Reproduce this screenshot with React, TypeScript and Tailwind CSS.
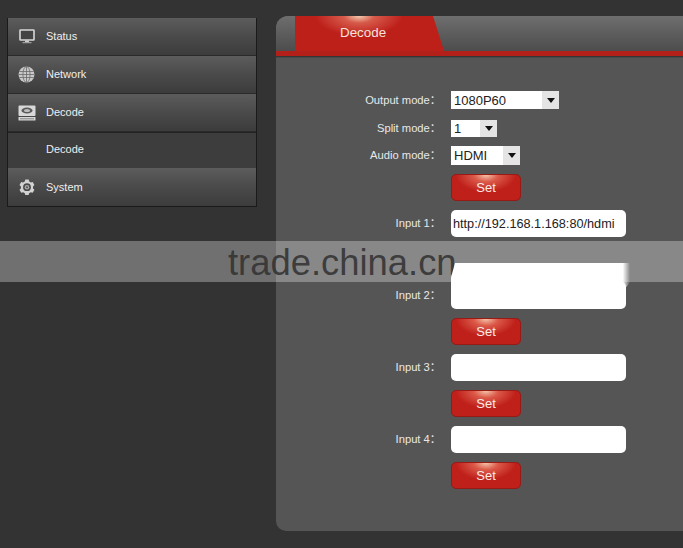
const sans = "font-['Liberation_Sans','Noto_Sans_CJK_SC',sans-serif]";

function MonitorIcon() {
  return (
    <svg width="16" height="15" viewBox="0 0 16 15" fill="none">
      <rect x="1" y="1" width="14" height="10" rx="0.5" fill="#444444" stroke="#d8d8d8" strokeWidth="1.6" />
      <path d="M6 11.5h4v1.5H6z" fill="#cfcfcf" />
      <path d="M3.5 13.2h9v1h-9z" fill="#b5b5b5" />
    </svg>
  );
}
function GlobeIcon() {
  return (
    <svg width="17" height="17" viewBox="0 0 17 17" fill="none">
      <circle cx="8.5" cy="8.5" r="8" fill="#c8c8c8" />
      <g stroke="#6a6a6a" strokeWidth="0.8">
        <ellipse cx="8.5" cy="8.5" rx="3.6" ry="8" />
        <path d="M8.5.5v16M1.2 5.5h14.6M.5 8.5h16M1.2 11.5h14.6" />
      </g>
    </svg>
  );
}
function DriveIcon() {
  return (
    <svg width="18" height="16" viewBox="0 0 18 16" fill="none">
      <rect x="0.5" y="0.5" width="17" height="10.5" rx="1" fill="#d8d8d8" />
      <ellipse cx="9" cy="5.5" rx="5.5" ry="3" fill="#5a5a5a" />
      <ellipse cx="9" cy="5.5" rx="3" ry="1.6" fill="#bdbdbd" />
      <rect x="0.5" y="12" width="17" height="3.5" rx="0.5" fill="#d5d5d5" />
      <path d="M2 13.8h14" stroke="#666" strokeWidth="0.7" />
    </svg>
  );
}
function GearIcon() {
  return (
    <svg width="16" height="16" viewBox="0 0 16 16" fill="none">
      <path
        d="M6.3.6h3.4l.5 1.9 1.7 1-.1.1 1.9-.5 1.7 2.9-1.4 1.4v2l1.4 1.4-1.7 2.9-1.9-.5-1.7 1-.5 1.9H6.3l-.5-1.9-1.7-1-1.9.5L.5 10.8l1.4-1.4v-2L.5 6l1.7-2.9 1.9.5 1.7-1z"
        fill="#d2d2d2"
      />
      <circle cx="8" cy="8.2" r="3.9" fill="#4a4a4a" />
      <circle cx="8" cy="8.2" r="2.3" fill="#a8a8a8" />
      <circle cx="8" cy="8.2" r="1" fill="#555" />
    </svg>
  );
}

function NavRow({ icon, label, last }: { icon: React.ReactNode; label: string; last?: boolean }) {
  return (
    <div className={`flex h-[38px] items-center bg-gradient-to-b from-[#5c5c5c] via-[#4a4a4a] to-[#3c3c3c] ${last ? "" : "border-b border-[#2a2a2a]"}`}>
      <div className="flex w-[38px] shrink-0 justify-center pr-[1px]">{icon}</div>
      <span className="text-[11px] text-[#eeeeee]">{label}</span>
    </div>
  );
}

function FormRow({ label, children, className = "" }: { label?: string; children: React.ReactNode; className?: string }) {
  return (
    <div className={`flex items-center ${className}`}>
      <div className="w-[165px] shrink-0 text-right text-[11.2px] text-[#e8e8e8]">
        {label ? `${label}：` : ""}
      </div>
      <div className="ml-[10px]">{children}</div>
    </div>
  );
}

function Dropdown({ value, width, h }: { value: string; width: string; h: string }) {
  return (
    <div className={`flex items-center justify-between bg-white pl-[3px] text-[13px] leading-none text-[#222] ${width} ${h}`}>
      <span>{value}</span>
      <span className="flex h-full w-[17px] items-center justify-center bg-[#e4e4e4]">
        <svg width="8" height="5" viewBox="0 0 8 5"><path d="M0 0h8L4 5z" fill="#111" /></svg>
      </span>
    </div>
  );
}

function SetButton() {
  return (
    <button className="flex h-[27px] w-[70px] items-center justify-center rounded-[5px] border border-[#961a15] bg-[#bf201a] bg-[radial-gradient(ellipse_30px_17px_at_50%_0%,#f3c4a8_0%,#dc5a4a_40%,transparent_100%)] text-[13px] text-[#f8ece8]">
      Set
    </button>
  );
}

function TextBox({ value = "" }: { value?: string }) {
  return (
    <input
      readOnly
      value={value}
      className="block h-[27px] w-[175px] rounded-[5px] bg-white px-[2px] text-[12.7px] text-[#222] outline-none"
    />
  );
}

export default function App() {
  return (
    <div className={`relative h-[548px] w-[683px] overflow-hidden bg-[#333333] ${sans}`}>
      <div className="flex items-start pt-[16px]">
        <aside className="ml-[7px] mt-[2px] w-[250px] shrink-0 border border-t-0 border-[#1a1a1a]">
          <NavRow icon={<MonitorIcon />} label="Status" />
          <NavRow icon={<GlobeIcon />} label="Network" />
          <NavRow icon={<DriveIcon />} label="Decode" />
          <div className="flex h-[37px] items-center border-t border-[#222] bg-[#3d3d3d] pb-[3px] pl-[38px] text-[11px] text-[#eeeeee]">Decode</div>
          <div className="-mt-[1px]">
            <NavRow icon={<GearIcon />} label="System" last />
          </div>
        </aside>

        <main className="ml-[19px] h-[515px] flex-1 overflow-hidden rounded-tl-[12px] rounded-bl-[10px] bg-[#555555]">
          <div className="h-[35px] bg-gradient-to-b from-[#6e6e6e] to-[#4d4d4d] pl-[19px]">
            <div className="flex h-full w-[149px] items-center bg-[#bd1f19] bg-[radial-gradient(ellipse_44px_20px_at_43%_0%,#f3cbb0_0%,#d65a4a_35%,transparent_100%)] pl-[45px] text-[13.4px] text-[#f3e3dd] [clip-path:polygon(0_0,138px_0,149px_100%,0_100%)]">
              Decode
            </div>
          </div>
          <div className="h-[5px] bg-[#b3201a]" />
          <div className="h-[2px] bg-gradient-to-b from-[#2b2b2b] to-[#555555]" />

          <div className="flex flex-col gap-[9px] pt-[33px]">
            <FormRow label="Output mode"><Dropdown value="1080P60" width="w-[108px]" h="h-[18px]" /></FormRow>
            <FormRow label="Split mode" className="mt-[2px]"><Dropdown value="1" width="w-[46px]" h="h-[17px]" /></FormRow>
            <FormRow label="Audio mode"><Dropdown value="HDMI" width="w-[69px]" h="h-[19px]" /></FormRow>
            <FormRow><SetButton /></FormRow>
            <FormRow label="Input 1" className="mb-[36px]"><TextBox value="http://192.168.1.168:80/hdmi" /></FormRow>
            <FormRow label="Input 2"><TextBox /></FormRow>
            <FormRow><SetButton /></FormRow>
            <FormRow label="Input 3"><TextBox /></FormRow>
            <FormRow><SetButton /></FormRow>
            <FormRow label="Input 4"><TextBox /></FormRow>
            <FormRow><SetButton /></FormRow>
          </div>
        </main>
      </div>

      {/* watermark band over the page */}
      <div className="absolute left-0 top-[241px] flex h-[41px] w-full items-center bg-white/30 pl-[228px] pt-[3px] text-[36.4px] leading-none text-[#333333]/90">
        trade.china.cn
      </div>
      <div className="absolute left-[451px] top-[263px] h-[24px] w-[179px] bg-[linear-gradient(to_right,white_96%,transparent)] [clip-path:polygon(4px_0,100%_0,100%_80%,98%_100%,0_100%,0_60%)]" />
    </div>
  );
}
